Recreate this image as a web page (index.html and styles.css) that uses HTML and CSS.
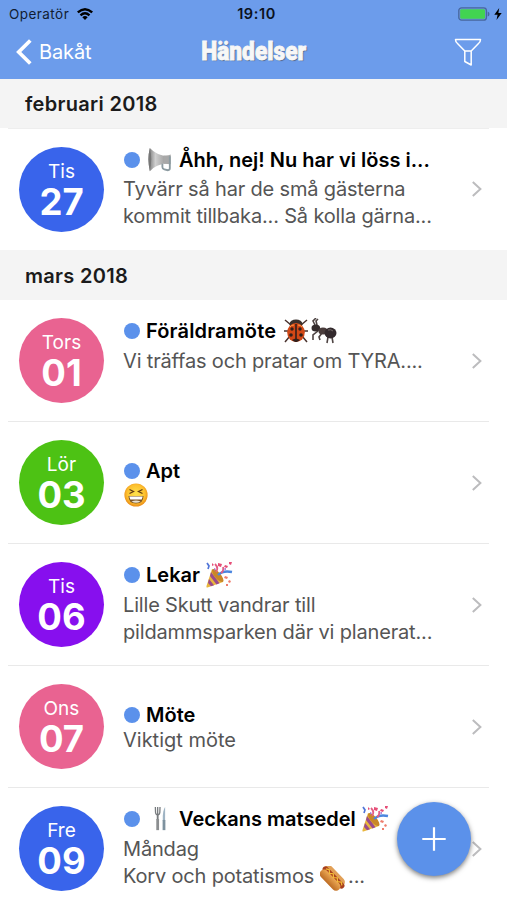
FILE: index.html
```html
<!DOCTYPE html>
<html lang="sv">
<head>
<meta charset="utf-8">
<title>Händelser</title>
<link rel="stylesheet" href="styles.css">
</head>
<body>
<svg class="defs" aria-hidden="true">
  <defs>
    <linearGradient id="metal" x1="0" x2="1"><stop offset="0" stop-color="#777"/><stop offset=".35" stop-color="#d0d0d0"/><stop offset="1" stop-color="#8f8f8f"/></linearGradient>
    <radialGradient id="smile" cx=".5" cy=".45" r=".55"><stop offset="0" stop-color="#ffe34a"/><stop offset=".7" stop-color="#fdc02f"/><stop offset="1" stop-color="#e98a16"/></radialGradient>
    <linearGradient id="bun" x1="0" y1="0" x2="0" y2="1"><stop offset="0" stop-color="#edaa55"/><stop offset="1" stop-color="#bd6c24"/></linearGradient>
    <symbol id="chevron" viewBox="0 0 12 18"><path d="M1.8 2 9.4 9 1.8 16" fill="none" stroke="#bcbcbe" stroke-width="2"/></symbol>
    <symbol id="party" viewBox="0 0 28 28">
      <path d="M7 8 18 21 2.500 26.500Q1 27 1.500 25Z" fill="#e9b63d"/>
      <path d="M6 11 14.500 22.300 11.500 23.400 5 15ZM4 18 9 24.200 6 25.300 3 22Z" fill="#9a4b8c"/>
      <ellipse cx="12.700" cy="14.500" rx="3" ry="8.200" transform="rotate(-40 12.700 14.500)" fill="#c98727"/>
      <path d="M13 14Q18 9 27 11" fill="none" stroke="#4b86df" stroke-width="2.400"/>
      <path d="M11 11Q14 7 10 3M16 12Q19 10 18 6" fill="none" stroke="#e45d83" stroke-width="1.800"/>
      <path d="M2 2 4 5 3 8" fill="none" stroke="#5175d8" stroke-width="1.700"/>
      <path d="m13 2 4 1-1 3-3-1zM20 4l3 1-1 2-3-1zM24 1l3 0-1 3-2-1zM7 2l2 2-2 1z" fill="#e64f78"/>
      <path d="m20 15 3 1-1 2-3-1zM24 19l2 1-1 2-2-1zM21 23l2 0 0 2-2 0z" fill="#ee7d6d"/>
      <path d="m18 8 3-1v2zM9 7l2 1-2 2z" fill="#a46ed0"/>
    </symbol>
  </defs>
</svg>
<div class="screen">
  <header class="top">
    <div class="status">
      <div class="carrier"><span class="carrier-name">Operatör</span>
        <svg class="wifi" viewBox="0 0 18 13"><path d="M1 4.500Q9-2.500 17 4.500L15.400 6.300Q9 .8 2.600 6.300ZM3.700 7.400Q9 2.800 14.300 7.400L12.700 9.200Q9 6 5.300 9.200ZM6.300 10.200Q9 7.900 11.700 10.200L9 13Z"/></svg>
      </div>
      <span class="clock">19:10</span>
      <div class="power">
        <svg class="battery" viewBox="0 0 32 14"><rect x=".8" y=".8" width="27.600" height="12.400" rx="2.800" fill="#6f98dc" stroke="#47679f" stroke-width="1.300"/><rect x="2.200" y="2.200" width="24.800" height="9.600" rx="1.400" fill="#42d451"/><path d="M29.700 4.500Q31.500 5 31.500 7T29.700 9.500Z" fill="#47679f"/></svg>
        <svg class="bolt" viewBox="0 0 8 12"><path d="M5.200 0 .3 6.700H3.600L2.500 12 7.700 4.900H4.400Z"/></svg>
      </div>
    </div>
    <nav class="nav">
      <a class="back"><svg class="back-icon" viewBox="0 0 18 28"><path d="M15.300 2.500 3.700 14 15.300 25.500" fill="none" stroke="#fff" stroke-width="3.700"/></svg><span class="back-text">Bakåt</span></a>
      <h1 class="title">Händelser</h1>
      <svg class="filter" viewBox="0 0 28 28"><path d="M1.500 1.500H26.500Q26.500 4 24.500 5.500L17.200 13H10.800L3.500 5.500Q1.500 4 1.500 1.500ZM10.800 13V23.500L17.200 27V13" fill="none" stroke="#fff" stroke-width="1.500" stroke-linejoin="round"/></svg>
    </nav>
  </header>
  <main>
    <h2 class="month">februari 2018</h2>
    <article class="event first">
      <div class="date blue"><span class="day">Tis</span><span class="num">27</span></div>
      <div class="info tall">
        <h3><i class="dot"></i><svg class="emoji horn" viewBox="0 0 28 26"><path d="M2 0Q-1 12 2 25Q8 18 22 16V9Q9 8 2 0Z" fill="url(#metal)"/><path d="M2 0Q5 12 2 25Q-1 12 2 0Z" fill="#777"/><path d="M17 8.500 22 8 24.500 7V17.500L17 17Z" fill="#a8a8a8"/><path d="M15.500 17v3.500q0 2 2 2.500l4 1q2 0 2-2V9" fill="none" stroke="#8b9aa0" stroke-width="2"/></svg><span>Åhh, nej! Nu har vi löss i...</span></h3>
        <p>Tyvärr så har de små gästerna<br>kommit tillbaka... Så kolla gärna...</p>
      </div>
      <svg class="chevron"><use href="#chevron"/></svg>
    </article>
    <h2 class="month second">mars 2018</h2>
    <article class="event">
      <div class="date pink"><span class="day">Tors</span><span class="num">01</span></div>
      <div class="info tall">
        <h3><i class="dot"></i><span class="wide">Föräldramöte</span><svg class="emoji beetle" viewBox="0 0 24 26"><path d="M7 7 1 2M17 7 23 2M5 13H0M19 13H24M6 18 1 24M18 18 23 24" stroke="#49322e" stroke-width="1.500" fill="none"/><ellipse cx="12" cy="6" rx="6.500" ry="4.500" fill="#3a302c"/><ellipse cx="12" cy="14.500" rx="8.800" ry="9.500" fill="#d34816"/><path d="M12 6V24" stroke="#32201c" stroke-width="1.600"/><g fill="#32201c"><circle cx="8" cy="11" r="1.700"/><circle cx="16" cy="11" r="1.700"/><circle cx="7" cy="17" r="1.800"/><circle cx="17" cy="17" r="1.800"/><path d="M8 22q4-3 8 0-4 4-8 0"/></g><path d="M6 9q1-2 4-2M14 7q3 0 4 2" stroke="#ff9a45" fill="none"/></svg><svg class="emoji ant" viewBox="0 0 26 26"><path d="M4 7 2 3 5 0M6 7 5 3 7 1M7 13 2 17 2 22M11 15 8 19 9 22M14 15 17 19 16 25M16 14 21 19 22 25" fill="none" stroke="#4e4443" stroke-width="1.600"/><ellipse cx="4.800" cy="10" rx="4.300" ry="3.500" fill="#342c2d"/><ellipse cx="12" cy="13" rx="4.600" ry="3.500" fill="#493c3b"/><ellipse cx="19.500" cy="15" rx="6" ry="5.400" fill="#332a2d"/><path d="M17 12q3-1 5 1" stroke="#776c6a" fill="none"/></svg></h3>
        <p>Vi träffas och pratar om TYRA....<br>&nbsp;</p>
      </div>
      <svg class="chevron"><use href="#chevron"/></svg>
    </article>
    <article class="event">
      <div class="date green"><span class="day">Lör</span><span class="num">03</span></div>
      <div class="info short">
        <h3><i class="dot"></i><span>Apt</span></h3>
        <p><svg class="laugh" viewBox="0 0 24 24"><circle cx="12" cy="12" r="11.600" fill="url(#smile)"/><path d="M5.500 6.500 9.500 8.500 5.500 10.500M18.500 6.500 14.500 8.500 18.500 10.500" fill="none" stroke="#623b12" stroke-width="1.300"/><path d="M4.500 13H19.500Q19.500 20.500 12 20.500T4.500 13Z" fill="#7d5525"/><path d="M5.300 13.500H18.700L17.700 16.500H6.300Z" fill="#fff"/><path d="M7.500 18.500Q12 16.500 16.500 18.500 12 21 7.500 18.500" fill="#e9e1cf"/></svg></p>
      </div>
      <svg class="chevron"><use href="#chevron"/></svg>
    </article>
    <article class="event">
      <div class="date purple"><span class="day">Tis</span><span class="num">06</span></div>
      <div class="info tall">
        <h3><i class="dot"></i><span>Lekar</span><svg class="emoji party"><use href="#party"/></svg></h3>
        <p>Lille Skutt vandrar till<br>pildammsparken där vi planerat...</p>
      </div>
      <svg class="chevron"><use href="#chevron"/></svg>
    </article>
    <article class="event">
      <div class="date pink"><span class="day">Ons</span><span class="num">07</span></div>
      <div class="info short">
        <h3><i class="dot"></i><span>Möte</span></h3>
        <p class="loose">Viktigt möte</p>
      </div>
      <svg class="chevron"><use href="#chevron"/></svg>
    </article>
    <article class="event">
      <div class="date blue"><span class="day">Fre</span><span class="num">09</span></div>
      <div class="info tall">
        <h3><i class="dot"></i><svg class="emoji cutlery" viewBox="0 0 28 26"><path d="M9 0 9.200 6Q9.500 8.500 11.500 8.500T13.800 6L14 0M11.500 0V8" fill="none" stroke="#777b7e" stroke-width="1.400"/><path d="M11.500 8V14" stroke="#777b7e" stroke-width="2"/><path d="M11.500 13V25" stroke="#8b8e90" stroke-width="3"/><path d="M19.500 0Q16.500 4 17 15H19.500Z" fill="#9fb4c4"/><path d="M18.300 14V25" stroke="#7e929f" stroke-width="3"/></svg><span>Veckans matsedel</span><svg class="emoji party"><use href="#party"/></svg></h3>
        <p>Måndag<br>Korv och potatismos<svg class="hotdog" viewBox="0 0 26 26"><g transform="rotate(46 13 13)"><rect x="-1" y="5" width="27" height="9" rx="4.500" fill="#e2a057"/><rect x="-2" y="8.500" width="30" height="6" rx="3" fill="#a83f1d"/><rect x="-1" y="11.500" width="27" height="9" rx="4.500" fill="url(#bun)"/><path d="M1 11 4 9 7 11.500 10 9 13 11.500 16 9 19 11.500 22 9 25 11" fill="none" stroke="#f3bc35" stroke-width="1.300"/></g></svg>...</p>
      </div>
      <svg class="chevron"><use href="#chevron"/></svg>
    </article>
  </main>
  <button class="add" aria-label="Lägg till"><svg viewBox="0 0 24 24"><path d="M12 .3V23.700M.3 12H23.700" stroke="#fff" stroke-width="2.200"/></svg></button>
</div>
</body>
</html>
```
FILE: styles.css
```css
* { box-sizing: border-box; }
body { margin: 0; background: #fff; font-family: Inter, "Liberation Sans", sans-serif; color: #000; }
h1, h2, h3, p { margin: 0; }
.defs { position: absolute; width: 0; height: 0; }
.screen { position: relative; width: 507px; height: 900px; overflow: hidden; }
.top { height: 79px; background: #6c9ceb; }
.status { display: grid; grid-template-columns: 1fr auto 1fr; align-items: center; height: 27px; padding: 0 5px 0 9px; }
.carrier { display: flex; align-items: center; gap: 7px; font-size: 13.500px; letter-spacing: .45px; color: #111d33; }
.wifi { width: 18px; height: 13px; }
.clock { font-size: 14.500px; font-weight: 600; letter-spacing: .6px; margin-right: -2px; color: #0a1120; }
.power { display: flex; justify-content: flex-end; align-items: center; gap: 4px; }
.battery { width: 32px; height: 14px; }
.bolt { width: 8px; height: 12px; }
.nav { display: grid; grid-template-columns: 1fr auto 1fr; align-items: center; height: 50px; padding: 0 25px 0 15px; color: #fff; }
.back { display: flex; align-items: center; gap: 6px; font-size: 20px; letter-spacing: -.1px; }
.back-icon { width: 18px; height: 28px; }
.title { margin: 0 -8px 0 2px; font-family: Roboto, sans-serif; font-weight: 900; font-size: 25px; line-height: 30px; -webkit-text-stroke: .8px #f7f7f7; color: #f7f7f7; text-shadow: 1px 1px 1px #4a6287; transform: scaleX(.91); }
.filter { width: 28px; height: 28px; justify-self: end; }
.month { height: 49px; padding-left: 25px; background: #f4f4f4; font-size: 20px; font-weight: 600; letter-spacing: .3px; line-height: 51px; color: #1b1b1b; }
.month.second { height: 50px; line-height: 53px; }
.event { display: flex; align-items: center; height: 122px; padding: 0 24px 1px 19px; background: linear-gradient(#e9e9e9, #e9e9e9) 8px 100% / 481px 1px no-repeat; }
.event.first { padding-bottom: 0; background: linear-gradient(#eee, #eee) 8px 0 / 481px 1px no-repeat; }
.date { display: flex; flex: none; flex-direction: column; align-items: center; width: 85px; height: 85px; padding-top: 13px; border-radius: 50%; color: #fff; }
.day { font-size: 19px; line-height: 24px; }
.num { font-size: 36.500px; line-height: 37px; font-weight: 700; }
.blue { background: #3964eb; }
.pink { background: #e96391; }
.green { background: #4dc214; }
.purple { background: #870fee; }
.info { flex: 1; min-width: 0; margin-left: 19px; white-space: nowrap; }
.info h3 { display: flex; align-items: center; height: 27px; font-size: 20px; font-weight: 600; }
.info p { font-size: 20px; line-height: 27px; letter-spacing: -.17px; color: #555; }
.info .loose { letter-spacing: 0; }
.info .wide { letter-spacing: .15px; }
.tall { padding-bottom: 2px; }
.tall h3 { margin-bottom: 3px; }
.short { padding-top: 3px; }
.short h3 { height: 25px; }
.short p { height: 27px; }
.dot { width: 16px; height: 16px; margin: 0 6px 0 1px; border-radius: 50%; background: #5b91eb; }
.emoji { flex: none; width: 26px; height: 26px; }
.horn { margin: 0 5px 0 2px; }
.cutlery { margin: 0 6px 0 1px; }
.beetle { width: 24px; margin-left: 8px; }
.ant { margin-left: 3px; }
.party { width: 28px; height: 28px; margin-left: 5px; }
.laugh { width: 24px; height: 24px; display: block; margin: 0 0 0 1px; }
.hotdog { width: 25px; height: 25px; margin: -2px 3px -2px 6px; vertical-align: -6px; }
.chevron { flex: none; width: 12px; height: 18px; }
.add { position: absolute; left: 397px; top: 802px; display: grid; place-items: center; width: 74px; height: 74px; padding: 0; border: 0; border-radius: 50%; background: #5b91ea; box-shadow: 0 2px 5px rgba(0, 0, 0, .5); }
.add svg { width: 24px; height: 24px; }
```
